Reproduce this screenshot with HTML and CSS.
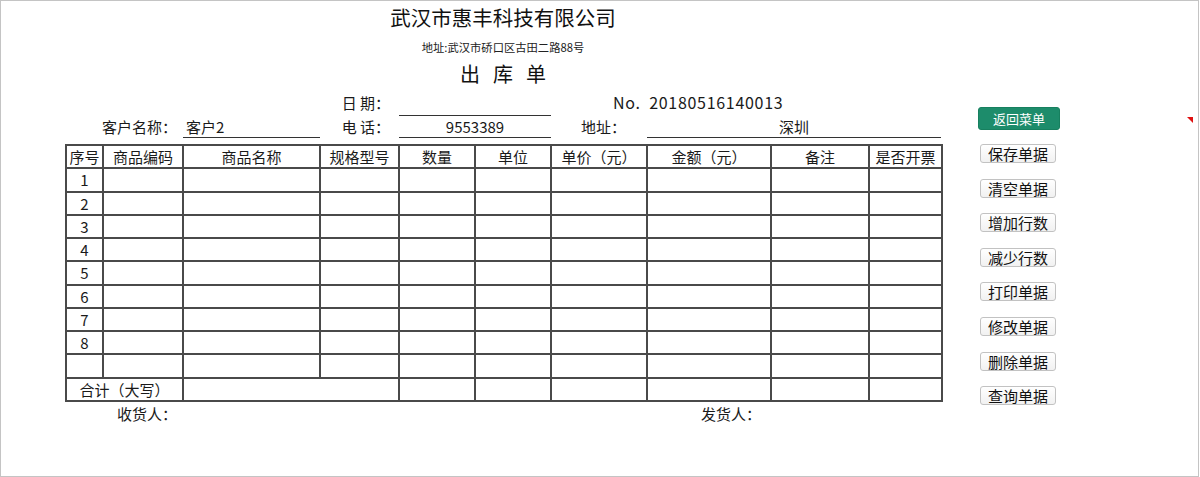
FILE: index.html
```html
<!DOCTYPE html>
<html lang="zh-CN">
<head>
<meta charset="utf-8">
<title>出库单</title>
<link rel="stylesheet" href="styles.css">
</head>
<body>
<div class="frame">
  <div class="sheet">
    <div class="company">武汉市惠丰科技有限公司</div>
    <div class="addr">地址:武汉市硚口区古田二路88号</div>
    <div class="doc-title"><span>出</span><span>库</span><span>单</span></div>

    <div class="info">
      <div class="lbl c4 r1">日 期：</div>
      <div class="field c5 r1"></div>
      <div class="no c67 r1">No.&nbsp; 20180516140013</div>

      <div class="lbl-l c2 r2">客户名称：</div>
      <div class="field left c3 r2">客户2</div>
      <div class="lbl c4 r2">电 话：</div>
      <div class="field c5 r2">9553389</div>
      <div class="lbl-addr c6 r2">地址：</div>
      <div class="field c7 r2">深圳</div>
    </div>

    <table class="grid">
      <colgroup>
        <col style="width:37px"><col style="width:80px"><col style="width:137px"><col style="width:79px">
        <col style="width:76px"><col style="width:76px"><col style="width:96px"><col style="width:124px">
        <col style="width:98px"><col style="width:73px">
      </colgroup>
      <thead>
        <tr><th>序号</th><th>商品编码</th><th>商品名称</th><th>规格型号</th><th>数量</th><th>单位</th><th>单价（元）</th><th>金额（元）</th><th>备注</th><th>是否开票</th></tr>
      </thead>
      <tbody>
        <tr><td>1</td><td></td><td></td><td></td><td></td><td></td><td></td><td></td><td></td><td></td></tr>
        <tr><td>2</td><td></td><td></td><td></td><td></td><td></td><td></td><td></td><td></td><td></td></tr>
        <tr><td>3</td><td></td><td></td><td></td><td></td><td></td><td></td><td></td><td></td><td></td></tr>
        <tr><td>4</td><td></td><td></td><td></td><td></td><td></td><td></td><td></td><td></td><td></td></tr>
        <tr><td>5</td><td></td><td></td><td></td><td></td><td></td><td></td><td></td><td></td><td></td></tr>
        <tr><td>6</td><td></td><td></td><td></td><td></td><td></td><td></td><td></td><td></td><td></td></tr>
        <tr><td>7</td><td></td><td></td><td></td><td></td><td></td><td></td><td></td><td></td><td></td></tr>
        <tr><td>8</td><td></td><td></td><td></td><td></td><td></td><td></td><td></td><td></td><td></td></tr>
        <tr><td></td><td></td><td></td><td></td><td></td><td></td><td></td><td></td><td></td><td></td></tr>
        <tr><td colspan="2">合计（大写）</td><td colspan="2"></td><td></td><td></td><td></td><td></td><td></td><td></td></tr>
      </tbody>
    </table>

    <div class="footer">
      <span class="receiver">收货人：</span>
      <span class="sender">发货人：</span>
    </div>
  </div>

  <div class="side">
    <button class="btn-green">返回菜单</button>
    <div class="btns">
      <button class="btn">保存单据</button>
      <button class="btn">清空单据</button>
      <button class="btn">增加行数</button>
      <button class="btn">减少行数</button>
      <button class="btn">打印单据</button>
      <button class="btn">修改单据</button>
      <button class="btn">删除单据</button>
      <button class="btn">查询单据</button>
    </div>
  </div>

  <div class="marker"></div>
</div>
</body>
</html>
```

FILE: styles.css
```css
html, body {
  margin: 0;
  padding: 0;
  background: #ffffff;
}

body {
  font-family: "Noto Sans CJK SC", "Noto Sans", sans-serif;
  color: #1a1a1a;
}

.frame {
  position: relative;
  box-sizing: border-box;
  width: 1199px;
  height: 477px;
  border: 1px solid #c4c4c4;
  display: flex;
  padding-left: 64px;
}

.sheet {
  width: 876px;
  display: flex;
  flex-direction: column;
}

.company {
  margin-top: 1px;
  height: 30px;
  line-height: 30px;
  font-size: 20.5px;
  text-align: center;
  color: #111;
}

.addr {
  margin-top: 7px;
  height: 16px;
  line-height: 16px;
  font-size: 11.3px;
  text-align: center;
  color: #222;
}

.doc-title {
  margin-top: 6px;
  height: 25px;
  line-height: 25px;
  font-size: 20px;
  display: flex;
  justify-content: center;
  gap: 13px;
  color: #111;
}

.info {
  margin-top: 6px;
  display: grid;
  grid-template-columns: 37px 81px 137px 79px 152px 96px 294px;
  grid-template-rows: 24px 22px;
  font-size: 15px;
}

.info > div {
  line-height: 21px;
  white-space: nowrap;
}

.r1 { grid-row: 1; }
.r2 { grid-row: 2; }
.c2 { grid-column: 2; }
.c3 { grid-column: 3; }
.c4 { grid-column: 4; }
.c5 { grid-column: 5; }
.c6 { grid-column: 6; }
.c7 { grid-column: 7; }
.c67 { grid-column: 6 / 8; }

.lbl {
  text-align: right;
  padding-right: 9px;
}

.lbl-addr {
  padding-left: 30px;
}

.field {
  border-bottom: 1px solid #333;
  text-align: center;
}

.r1.field { height: 23px; }
.r2.field { height: 21px; }

.field.left {
  text-align: left;
  padding-left: 3px;
}

.no {
  padding-left: 62px;
  font-size: 16px;
  letter-spacing: 0.7px;
}

.grid {
  margin-top: 6px;
  width: 876px;
  height: 256px;
  table-layout: fixed;
  border-collapse: collapse;
  font-size: 15px;
  border: 2px solid #444;
}

.grid tr {
  height: 23.27px;
}

.grid th,
.grid td {
  border: 2px solid #4a4a4a;
  padding: 0;
  text-align: center;
  font-weight: normal;
  line-height: 19px;
  white-space: nowrap;
  overflow: hidden;
}

.footer {
  height: 24px;
  line-height: 24px;
  font-size: 15px;
  display: flex;
}

.receiver {
  margin-left: 52px;
}

.sender {
  margin-left: 524px;
}

.side {
  margin-left: 37px;
  padding-top: 106px;
  display: flex;
  flex-direction: column;
}

.btn-green {
  width: 82px;
  height: 23px;
  border: 1px solid #17805f;
  border-radius: 3px;
  background: #1d8c6b;
  color: #ffffff;
  font-family: inherit;
  font-size: 13px;
  line-height: 19px;
  padding: 0;
}

.btns {
  margin-top: 14px;
  margin-left: 2px;
  display: flex;
  flex-direction: column;
  gap: 15.6px;
}

.btn {
  width: 76px;
  height: 19px;
  border: 1px solid #c2c2c2;
  border-radius: 3px;
  background: linear-gradient(#ffffff, #f1f1f1);
  color: #111;
  font-family: inherit;
  font-size: 15px;
  line-height: 17px;
  padding: 0;
}

.marker {
  position: absolute;
  left: 1186px;
  top: 116px;
  width: 0;
  height: 0;
  border-top: 6px solid #e01010;
  border-left: 6px solid transparent;
}
```
